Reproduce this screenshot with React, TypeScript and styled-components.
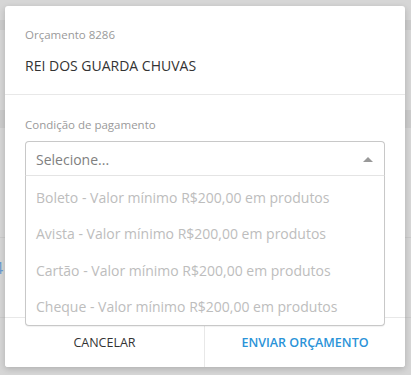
import React from 'react';
import styled, {createGlobalStyle} from 'styled-components';

const GlobalStyle = createGlobalStyle`
    html, body {
        margin: 0;
        padding: 0;
        width: 411px;
        height: 375px;
        overflow: hidden;
        background: #d6d6d6;
        font-family: 'Open Sans', 'Liberation Sans', sans-serif;
    }
`;

const Page = styled.div`
    position: relative;
    width: 411px;
    height: 375px;
    display: flex;
    flex-direction: column;
    background: #d6d6d6;
`;

const Band = styled.div<{h: number; dark?: boolean; line?: boolean}>`
    height: ${({h}) => h}px;
    flex: none;
    background: ${({dark}) => (dark ? '#cbcbcb' : '#d6d6d6')};
    border-bottom: ${({line}) => (line ? '1px solid #cacaca' : 'none')};
    display: flex;
    align-items: center;
    box-sizing: border-box;
`;

const PeekText = styled.span<{color: string}>`
    font-size: 16px;
    margin-left: -6px;
    color: ${({color}) => color};
`;

const Overlay = styled.div`
    position: absolute;
    top: 6px;
    left: 5px;
    width: 400px;
    height: 361px;
    background: #fff;
    border-radius: 3px;
    box-shadow: 0 2px 6px rgba(0, 0, 0, 0.18);
    display: flex;
    flex-direction: column;
`;

const Header = styled.header`
    height: 89px;
    box-sizing: border-box;
    padding: 21px 20px 0;
    border-bottom: 1px solid #e8e8e8;
`;

const Subtitle = styled.div`
    font-size: 11.5px;
    line-height: 16px;
    color: #9a9a9a;
`;

const Name = styled.div`
    margin-top: 13px;
    font-size: 14px;
    line-height: 20px;
    color: #333;
`;

const Body = styled.section`
    flex: 1;
    position: relative;
    padding: 22px 20px 0;
`;

const Label = styled.div`
    font-size: 11.5px;
    line-height: 16px;
    color: #9a9a9a;
    margin-bottom: 8px;
`;

const Select = styled.div`
    position: relative;
    z-index: 2;
`;

const Control = styled.div`
    height: 35px;
    box-sizing: border-box;
    border: 1px solid #c8c8c8;
    border-bottom-color: #e4e4e4;
    border-radius: 4px 4px 0 0;
    display: flex;
    align-items: center;
    justify-content: space-between;
    padding: 1px 10px 0;
    font-size: 14px;
    color: #808080;
    background: #fff;
`;

const Caret = styled.span`
    width: 0;
    height: 0;
    border-left: 5px solid transparent;
    border-right: 5px solid transparent;
    border-bottom: 5px solid #999;
    margin-right: 1px;
`;

const Menu = styled.ul`
    position: absolute;
    top: 35px;
    left: 0;
    right: 0;
    margin: 0;
    padding: 3px 0 0;
    list-style: none;
    background: #fff;
    border: 1px solid #c8c8c8;
    border-top: none;
    border-radius: 0 0 4px 4px;
    box-shadow: 0 1px 1px rgba(0, 0, 0, 0.06);
`;

const Option = styled.li`
    height: 36.5px;
    display: flex;
    align-items: center;
    padding: 0 10px;
    font-size: 14px;
    color: #bdbdbd;
`;

const Footer = styled.footer`
    height: 49px;
    flex: none;
    display: grid;
    grid-template-columns: 199px 1fr;
    border-top: 1px solid #e8e8e8;
`;

const FooterButton = styled.button<{primary?: boolean}>`
    border: none;
    background: #fff;
    font-family: inherit;
    font-size: 12.5px;
    font-weight: ${({primary}) => (primary ? 600 : 400)};
    color: ${({primary}) => (primary ? '#2a93d8' : '#333')};
    text-transform: uppercase;
    padding: 0;
    border-left: ${({primary}) => (primary ? '1px solid #e8e8e8' : 'none')};
    border-radius: ${({primary}) => (primary ? '0 0 3px 0' : '0 0 0 3px')};
`;

const options = ['Boleto', 'Avista', 'Cartão', 'Cheque'];

export default function App() {
	return (
		<>
			<GlobalStyle />
			<Page>
				<Band h={20} />
				<Band h={10} dark />
				<Band h={80}>
					<PeekText color="#666">I</PeekText>
				</Band>
				<Band h={18} dark />
				<Band h={110} line />
				<Band h={60}>
					<PeekText color="#6b9ad0">4</PeekText>
				</Band>
				<Band h={20} line />
				<Overlay>
					<Header>
						<Subtitle>Orçamento 8286</Subtitle>
						<Name>REI DOS GUARDA CHUVAS</Name>
					</Header>
					<Body>
						<Label>Condição de pagamento</Label>
						<Select>
							<Control>
								<span>Selecione...</span>
								<Caret />
							</Control>
							<Menu>
								{options.map(option => (
									<Option key={option}>{option} - Valor mínimo R$200,00 em produtos</Option>
								))}
							</Menu>
						</Select>
					</Body>
					<Footer>
						<FooterButton>Cancelar</FooterButton>
						<FooterButton primary>Enviar orçamento</FooterButton>
					</Footer>
				</Overlay>
			</Page>
		</>
	);
}
